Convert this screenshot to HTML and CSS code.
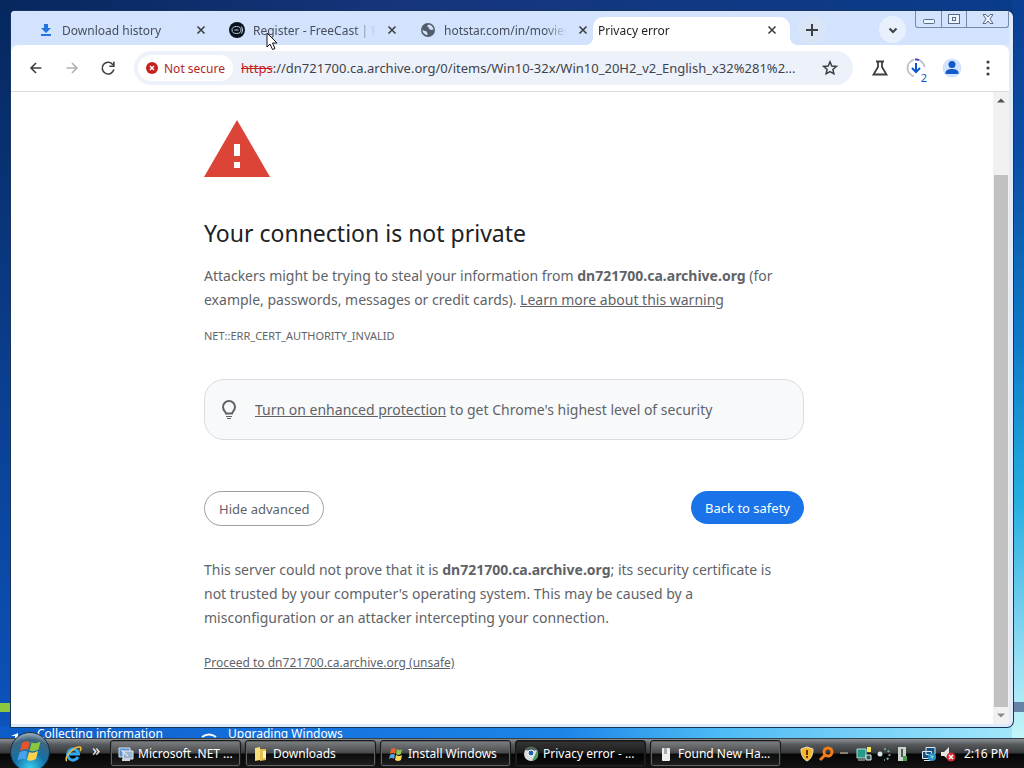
FILE: index.html
```
<!DOCTYPE html>
<html lang="en">
<head>
    <meta charset="UTF-8" />
    <meta name="viewport" content="width=device-width, initial-scale=1.0" />
    <title>Privacy error</title>
    <link rel="stylesheet" href="styles.css">
</head>
<body>

    <!-- Browser window -->
    <div class="window">
        <header class="tab-strip">
            <div class="tab">
                <svg class="icon" viewBox="0 0 16 16"><path d="M6 2h4v4h3l-5 5-5-5h3z M3 12h10v2H3z" fill="#2374e1"/></svg>
                <span class="tab-title">Download history</span>
                <button class="tab-close" aria-label="Close tab"><svg class="icon" viewBox="0 0 16 16"><path d="M4.500 4.500l7 7M11.500 4.500l-7 7"/></svg></button>
            </div>
            <div class="tab">
                <svg class="icon" viewBox="0 0 16 16"><circle cx="8" cy="8" r="8" fill="#07131f"/><ellipse cx="7.500" cy="8" rx="4.500" ry="3.500" fill="none" stroke="#b9cbd6"/><path d="M5.500 8h4M12.500 4.500q2.500 3.500 0 7" fill="none" stroke="#b9cbd6"/></svg>
                <span class="tab-title">Register - FreeCast | Fr</span>
                <button class="tab-close" aria-label="Close tab"><svg class="icon" viewBox="0 0 16 16"><path d="M4.500 4.500l7 7M11.500 4.500l-7 7"/></svg></button>
            </div>
            <div class="tab">
                <svg class="icon" viewBox="0 0 16 16"><circle cx="8" cy="8" r="7" fill="#525c6b"/><path d="M2.500 7.500C3 9 5 8.500 6.500 9.500s0 2 1.500 3.500c-3.500 0-5.500-2.500-5.500-5.500zM9 2.500c-2 1-2.500 2-1 2.500s.5 2 2 2.500 2 .5 3.500 0C13 5 11.500 3 9 2.500z" fill="#d3e3fd"/></svg>
                <span class="tab-title">hotstar.com/in/movies</span>
                <button class="tab-close" aria-label="Close tab"><svg class="icon" viewBox="0 0 16 16"><path d="M4.500 4.500l7 7M11.500 4.500l-7 7"/></svg></button>
            </div>
            <div class="tab active">
                <span class="tab-title">Privacy error</span>
                <button class="tab-close" aria-label="Close tab"><svg class="icon" viewBox="0 0 16 16"><path d="M4.500 4.500l7 7M11.500 4.500l-7 7"/></svg></button>
            </div>
            <button class="new-tab" aria-label="New tab"><svg class="icon" viewBox="0 0 16 16"><path d="M8 2v12M2 8h12"/></svg></button>
            <button class="tab-search" aria-label="Search tabs"><svg class="icon" viewBox="0 0 16 16"><path d="M4.500 6.500L8 10l3.500-3.500"/></svg></button>
            <div class="window-buttons">
                <button aria-label="Minimize"><svg viewBox="0 0 14 12"><rect x="1.500" y="6.500" width="11" height="4" rx="1"/></svg></button>
                <button aria-label="Restore"><svg viewBox="0 0 14 12"><rect x="1.500" y="1.500" width="11" height="9"/><rect x="5.500" y="4.500" width="3" height="3"/></svg></button>
                <button class="wide" aria-label="Close"><svg viewBox="0 0 14 12"><path d="M2 1.500h3l2 2.500 2-2.500h3L9 6l3 4.500H9L7 8l-2 2.500H2L5 6z"/></svg></button>
            </div>
        </header>

        <div class="toolbar">
            <button class="tool" aria-label="Back"><svg viewBox="0 0 20 20"><path d="M16 10H5M10 4.500L4.500 10l5.500 5.500"/></svg></button>
            <button class="tool disabled" aria-label="Forward"><svg viewBox="0 0 20 20"><path d="M4 10h11M10 4.500l5.500 5.500-5.500 5.500"/></svg></button>
            <button class="tool" aria-label="Reload"><svg viewBox="0 0 20 20"><path d="M15.500 6.500A6.500 6.500 0 1 0 16.500 11.500M16.500 3v5H11.500"/></svg></button>
            <div class="omnibox">
                <button class="security-chip">
                    <svg viewBox="0 0 12 12"><circle cx="6" cy="6" r="6" fill="#c5221f"/><path d="M4 4l4 4M8 4L4 8" stroke="#fff" stroke-width="1.500"/></svg>
                    Not secure
                </button>
                <label class="scheme" for="address">https</label>
                <input class="address" id="address" type="text" value="://dn721700.ca.archive.org/0/items/Win10-32x/Win10_20H2_v2_English_x32%281%2..." />
                <button class="bookmark" aria-label="Bookmark this tab"><svg viewBox="0 0 16 16"><path d="M8 1.800l1.800 4.200 4.500.4-3.400 3 1 4.400L8 11.500l-3.900 2.300 1-4.400-3.400-3 4.500-.4z"/></svg></button>
            </div>
            <button class="tool action" aria-label="Labs"><svg viewBox="0 0 20 20"><path d="M6 3.500h8M8 4v5l-4.500 7.500h13L12 9V4"/></svg></button>
            <button class="tool action" aria-label="Downloads"><svg viewBox="0 0 20 20"><path d="M10.500 1.500a8.500 8.500 0 0 1 8 7.500M8 18.200A8.500 8.500 0 0 1 8 1.700" stroke="#b8bdc8"/><path d="M9 1.500a8.500 8.500 0 0 1 4 .5" stroke="#4539bd"/><path d="M10 5v9M6 10l4 4 4-4" stroke="#0b57d0" stroke-width="2"/></svg><span class="badge">2</span></button>
            <button class="tool action" aria-label="Profile"><svg viewBox="0 0 20 20"><circle class="solid" cx="10" cy="10" r="9.500" fill="#d3e3fd"/><circle class="solid" cx="10" cy="6.500" r="3.500" fill="#1459c8"/><path class="solid" d="M3.500 15c0-3 3-4 6.500-4s6.500 1 6.500 4v1h-13z" fill="#1459c8"/></svg></button>
            <button class="tool action" aria-label="Menu"><svg viewBox="0 0 20 20"><g class="solid" fill="#3c4043"><circle cx="10" cy="4" r="1.600"/><circle cx="10" cy="10" r="1.600"/><circle cx="10" cy="16" r="1.600"/></g></svg></button>
        </div>

        <div class="viewport">
            <main class="interstitial">
                <svg class="warning" viewBox="0 0 66 58"><path d="M33 0l33 57H0z" fill="#db4437"/><path d="M30 24h6v12h-6zM30 42h6v6h-6z" fill="#fff"/></svg>
                <h1>Your connection is not private</h1>
                <p>Attackers might be trying to steal your information from <strong>dn721700.ca.archive.org</strong> (for example, passwords, messages or credit cards). <a href="#">Learn more about this warning</a></p>
                <div class="error-code">NET::ERR_CERT_AUTHORITY_INVALID</div>
                <div class="promo">
                    <svg viewBox="0 0 16 20"><path d="M5 13.500c0-1.500-3-3-3-6.500a6 6 0 0 1 12 0c0 3.500-3 5-3 6.500z" fill="none" stroke="#5f6368" stroke-width="2"/><path d="M5 16h6v1H5zM6 18h4v1H6z" fill="#5f6368"/></svg>
                    <p><a href="#">Turn on enhanced protection</a> to get Chrome's highest level of security</p>
                </div>
                <div class="actions">
                    <button class="secondary">Hide advanced</button>
                    <button class="primary">Back to safety</button>
                </div>
                <p>This server could not prove that it is <strong>dn721700.ca.archive.org</strong>; its security certificate is not trusted by your computer's operating system. This may be caused by a misconfiguration or an attacker intercepting your connection.</p>
                <a href="#" class="proceed">Proceed to dn721700.ca.archive.org (unsafe)</a>
            </main>
            <div class="scrollbar">
                <svg viewBox="0 0 16 16"><path d="M4 10l4-4 4 4z" fill="#505050"/></svg>
                <div class="track"><div class="thumb"></div></div>
                <svg viewBox="0 0 16 16"><path d="M4 6l4 4 4-4z" fill="#8b8b8b"/></svg>
            </div>
        </div>
    </div>

    <!-- Setup progress behind the window -->
    <div class="setup-steps">
        <svg viewBox="0 0 16 11"><path d="M1 9l7-3v5H5V9z" fill="#fff"/></svg>
        <span class="step">Collecting information</span>
        <svg viewBox="0 0 16 11"><path d="M1 10q7-5 14 0" fill="none" stroke="#fff" stroke-width="2"/></svg>
        <span class="step">Upgrading Windows</span>
    </div>

    <footer class="taskbar">
        <button class="start" aria-label="Start">
            <svg viewBox="0 0 40 36">
                <defs><radialGradient id="orb" cx="50%" cy="90%" r="90%"><stop offset="0" stop-color="#35cdf0"/><stop offset=".45" stop-color="#1671a8"/><stop offset=".8" stop-color="#40657e"/><stop offset="1" stop-color="#a9b8c3"/></radialGradient></defs>
                <circle cx="20" cy="20" r="19.500" fill="url(#orb)" stroke="#132d3f"/>
                <path d="M12 11q4-3 8-1l-2 8q-4-2-8 1z" fill="#e8542a"/>
                <path d="M21.500 10.500q4 2 9-1l-2 8q-5 3-9 1z" fill="#8cc63f"/>
                <path d="M9.500 20.500q4-3 8-1l-2 8q-4-2-8 1z" fill="#4aa3e8"/>
                <path d="M19 20q4 2 9-1l-2 8q-5 3-9 1z" fill="#fdd24a"/>
            </svg>
        </button>
        <button class="quick" aria-label="Internet Explorer"><svg viewBox="0 0 18 18"><path d="M14 12a5.500 5.500 0 1 1 .5-3H5" fill="none" stroke="#35a7ef" stroke-width="3"/><path d="M3 16C-1 14 9 1 16 2q2 1 0 4" fill="none" stroke="#f1c232" stroke-width="1.500"/></svg></button>
        <button class="overflow" aria-label="More">»</button>
        <button class="task"><svg class="icon" viewBox="0 0 16 16"><path d="M1 2h11v9H1z" fill="#5b91cf" stroke="#d7e4ef"/><path d="M5 5h10v8H5z" fill="#9cb4cc" stroke="#e9eef3"/><path d="M4 13h8v2H4z" fill="#ccd6df"/><path d="M3 4l7 6" stroke="#fff"/></svg><span>Microsoft .NET ...</span></button>
        <button class="task"><svg class="icon" viewBox="0 0 16 16"><path d="M2 2l5-1v13l-5 1z" fill="#f4dc7a"/><path d="M7 3h6v11l-6 1z" fill="#e3bf4d"/><path d="M10 5h3v7h-3z" fill="#fdf4bf"/></svg><span>Downloads</span></button>
        <button class="task"><svg class="icon" viewBox="0 0 16 16"><path d="M3 3q3-2 5 0L7 8Q5 6 2 8z" fill="#e8612c"/><path d="M9 3q3 2 5 0l-1 5q-3 2-5 0z" fill="#8dc44b"/><path d="M2 9q3-2 5 0l-1 4q-2-2-5 0z" fill="#5aa7e8"/><path d="M8 9q3 2 6 0l-1 5q-3 2-6 0z" fill="#fbd75a"/></svg><span>Install Windows</span></button>
        <button class="task current"><svg class="icon" viewBox="0 0 16 16"><circle cx="8" cy="8" r="7" fill="#d8dde0"/><path d="M2 4a7 7 0 0 1 12 0l-5 1z" fill="#50645b"/><path d="M14 4a7 7 0 0 1-5 11l3-6z" fill="#4f9b61"/><circle cx="8" cy="7" r="3" fill="#235fae" stroke="#fff"/></svg><span>Privacy error - ...</span></button>
        <button class="task"><svg class="icon" viewBox="0 0 16 16"><rect x="4" y="2" width="8" height="13" rx="1" fill="#eee"/><path d="M6 2v6h3V2" fill="#aaa"/></svg><span>Found New Ha...</span></button>
        <div class="tray">
            <svg class="icon" viewBox="0 0 16 16"><path d="M8 1l6 2c0 6-2 10-6 12-4-2-6-6-6-12z" fill="#f5b62c" stroke="#e9dfc3"/><path d="M7 4h2v5H7zM7 10h2v2H7z" fill="#5b3508"/></svg>
            <svg class="icon" viewBox="0 0 16 16"><circle cx="10" cy="6" r="4" fill="none" stroke="#f57c16" stroke-width="3"/><path d="M7 9l-5 5" stroke="#f57c16" stroke-width="3"/></svg>
            <svg class="icon" viewBox="0 0 16 16"><path d="M3 7h8" stroke="#8a8175" stroke-width="2"/></svg>
            <svg class="icon" viewBox="0 0 16 16"><path d="M1 3h9v9H1z" fill="#25998a" stroke="#b5e2d2"/><path d="M11 1h4v5h-4z" fill="#f1e85a"/><path d="M10 9h5v5h-5z" fill="#286058" stroke="#eee"/><path d="M2 14h7" stroke="#ddd"/></svg>
            <svg class="icon" viewBox="0 0 16 16"><circle cx="5" cy="8" r="2.500" fill="#cfe5ea"/><path d="M9 3a5 5 0 0 1 0 11" fill="none" stroke="#75a99c" stroke-width="2" stroke-dasharray="2 2"/></svg>
            <svg class="icon spaced" viewBox="0 0 16 16"><rect x="4" y="1" width="8" height="14" fill="#cbd2cc"/><path d="M7 3h2v8H7z" fill="#456050"/><path d="M9 10h4v5H9z" fill="#43a047"/></svg>
            <svg class="icon" viewBox="0 0 16 16"><path d="M5 1.500h9v7H5zM1.500 5.500h9v7h-9zM3 14.500h7" fill="#19507b" stroke="#dceaf5"/><circle cx="11" cy="11" r="4" fill="#2492cf"/><path d="M9 9l4 1-2 3z" fill="#8bd3a0"/></svg>
            <svg class="icon" viewBox="0 0 16 16"><path d="M1 6h3l5-5v13l-5-4H1z" fill="#e6e6e6"/><circle cx="11" cy="11" r="4.500" fill="#d42a30"/><path d="M9 9l4 4M13 9l-4 4" stroke="#fff" stroke-width="1.500"/></svg>
            <time class="clock">2:16 PM</time>
        </div>
    </footer>

    <svg class="cursor" viewBox="0 0 12 19"><path d="M1 1v14l3-3 2.500 5.500 2.500-1L6.500 11H11z" fill="#fff" stroke="#111"/></svg>

</body>
</html>
```
FILE: styles.css
```
* {
    box-sizing: border-box;
}

body {
    margin: 0;
    height: 100vh;
    display: flex;
    flex-direction: column;
    padding-top: 11px;
    overflow: hidden;
    font-family: "Noto Sans", "Open Sans", sans-serif;
    font-size: 12px;
    background:
        linear-gradient(#8dc63f, #8dc63f) 0 703px / 11px 9px no-repeat,
        linear-gradient(#6683a6, #6683a6) 100% 702px / 10px 10px no-repeat,
        linear-gradient(#0a3f92, #0a4da6 20%, #0f7bc8 45%, #25aee0 65%, #8fdcf3 85%, #c4f5f9 96%) 100% 0 / 12px 100% no-repeat,
        linear-gradient(90deg, #0c5bc6, #1673df 30%, #1c86e8 55%, #4cbaf5 70%, #a5e9fb) 0 726px / 100% 12px no-repeat,
        linear-gradient(90deg, #06275e, #16357c 40%, #0a3c8c) 0 0 / 100% 11px no-repeat,
        linear-gradient(#06275e, #0a3a85 40%, #0c55c0);
}

button {
    border: none;
    padding: 0;
    margin: 0;
    background: none;
    font: inherit;
    color: inherit;
    display: flex;
    align-items: center;
    justify-content: center;
}

svg {
    display: block;
    flex: none;
}

.icon {
    width: 16px;
    height: 16px;
}

/* Window */
.window {
    flex: 1;
    min-height: 0;
    margin: 0 11px;
    padding: 0 4px 3px 0;
    display: flex;
    flex-direction: column;
    background: #dfeafa;
    border-radius: 4px 6px 6px 0;
    box-shadow: 0 0 0 1px #17365f;
    overflow: hidden;
}

.tab-strip {
    display: flex;
    height: 34px;
    padding-left: 17px;
    background: #d3e3fd;
}

.tab {
    width: 191px;
    height: 26px;
    margin-top: 6px;
    padding: 0 10px;
    display: flex;
    align-items: center;
    gap: 8px;
    color: #474e5c;
}

.tab-title {
    flex: 1;
    min-width: 0;
    white-space: nowrap;
    overflow: hidden;
    -webkit-mask-image: linear-gradient(90deg, #000 82%, transparent);
    mask-image: linear-gradient(90deg, #000 82%, transparent);
}

.tab.active {
    position: relative;
    width: 197px;
    height: 28px;
    padding: 0 10px 2px 5px;
    margin-left: -8px;
    color: #1f1f1f;
    background: #fff;
    border-radius: 10px 10px 0 0;
    align-self: flex-end;
}

/* curved feet of the selected tab */
.tab.active::before,
.tab.active::after {
    content: "";
    position: absolute;
    bottom: 0;
    width: 8px;
    height: 8px;
}

.tab.active::before {
    right: 100%;
    background: radial-gradient(circle at 0 0, transparent 8px, #fff 8px);
}

.tab.active::after {
    left: 100%;
    background: radial-gradient(circle at 100% 0, transparent 8px, #fff 8px);
}

.tab-close svg,
.new-tab svg,
.tab-search svg {
    fill: none;
    stroke: #3c4043;
    stroke-width: 2;
}

.tab-close svg {
    stroke-width: 1.6;
}

.new-tab {
    width: 28px;
    height: 28px;
    margin: 5px 0 0 8px;
    border-radius: 50%;
    background: #d9e5f6;
}

.tab-search {
    width: 27px;
    height: 27px;
    margin: 5px 9px 0 auto;
    border-radius: 50%;
    background: #e8f0fe;
}

.window-buttons {
    display: flex;
    height: 17px;
    border: 1px solid #7489ac;
    border-top: none;
    border-radius: 0 0 3px 3px;
}

.window-buttons button {
    width: 25px;
}

.window-buttons button + button {
    border-left: 1px solid #7489ac;
}

.window-buttons .wide {
    width: 42px;
}

.window-buttons svg {
    width: 14px;
    height: 12px;
    fill: #eef4fd;
    stroke: #5a6c8b;
}

/* Toolbar */
.toolbar {
    display: flex;
    align-items: center;
    height: 47px;
    padding: 0 11px 0 15px;
    background: #fff;
    border-bottom: 1px solid #dadce0;
    border-radius: 8px 8px 0 0;
}

.tool {
    position: relative;
    width: 20px;
    height: 20px;
    margin-right: 16px;
}

.tool svg {
    width: 18px;
    height: 18px;
    fill: none;
    stroke: #3c4043;
    stroke-width: 1.8;
}

.tool .solid {
    stroke: none;
}

.tool.disabled svg {
    stroke: #aeb1b5;
}

.tool.action {
    margin: 0 0 0 16px;
}

.tool.action svg {
    width: 20px;
    height: 20px;
}

.badge {
    position: absolute;
    right: -2px;
    bottom: -6px;
    padding: 0 1px;
    font-size: 11px;
    line-height: 12px;
    color: #0b57d0;
    background: #fff;
}

.omnibox {
    flex: 1;
    min-width: 0;
    height: 34px;
    padding: 0 15px 0 4px;
    margin-right: 1px;
    display: flex;
    align-items: center;
    background: #edf1fa;
    border-radius: 17px;
}

.security-chip {
    height: 26px;
    padding: 0 8px;
    gap: 6px;
    white-space: nowrap;
    color: #b3261e;
    background: #fff;
    border-radius: 13px;
}

.security-chip svg {
    width: 12px;
    height: 12px;
}

.scheme {
    margin-left: 8px;
    font-size: 13px;
    color: #c5221f;
    text-decoration: line-through;
}

.address {
    flex: 1;
    min-width: 0;
    padding: 0;
    border: none;
    outline: none;
    background: none;
    font-family: inherit;
    font-size: 13px;
    color: #3f444b;
}

.bookmark svg {
    width: 16px;
    height: 16px;
    fill: none;
    stroke: #3c4043;
    stroke-width: 1.5;
}

/* Page */
.viewport {
    flex: 1;
    min-height: 0;
    display: flex;
    background: #fff;
}

.interstitial {
    flex: 1;
    min-width: 0;
    max-width: 604px;
    margin: 0 auto;
    padding: 28px 0 0 4px;
    font-size: 14px;
    line-height: 24px;
    color: #5f6368;
}

.interstitial a {
    color: inherit;
    text-decoration: underline;
}

.interstitial p {
    max-width: 580px;
    margin: 0;
}

.warning {
    width: 66px;
    height: 58px;
}

h1 {
    margin: 40px 0 16px;
    font-size: 23px;
    font-weight: 400;
    line-height: 30px;
    color: #202124;
}

.error-code {
    margin-top: 12px;
    font-size: 11px;
}

.promo {
    display: flex;
    align-items: center;
    gap: 18px;
    height: 61px;
    margin: 31px 0 51px;
    padding: 0 16px;
    background: #f8f9fa;
    border: 1px solid #dadce0;
    border-radius: 20px;
}

.promo svg {
    width: 16px;
    height: 20px;
}

.actions {
    display: flex;
    justify-content: space-between;
    align-items: flex-start;
    margin-bottom: 32px;
}

.actions button {
    padding: 0 14px;
    font-size: 13px;
    border-radius: 18px;
}

.secondary {
    height: 35px;
    border: 1px solid #9aa0a6;
}

.actions .primary {
    height: 33px;
    color: #fff;
    background: #1a73e8;
}

.interstitial .proceed {
    display: inline-block;
    margin-top: 21px;
    font-size: 12px;
}

.scrollbar {
    width: 16px;
    display: flex;
    flex-direction: column;
    background: #f1f1f1;
}

.scrollbar svg {
    width: 16px;
    height: 17px;
}

.track {
    flex: 1;
    display: flex;
    align-items: flex-end;
}

.thumb {
    width: 14px;
    height: 89%;
    margin-left: 1px;
    background: #c1c1c1;
}

/* Desktop strip */
.setup-steps {
    display: flex;
    height: 11px;
    padding-left: 10px;
    overflow: hidden;
    color: #fff;
}

.setup-steps svg {
    width: 16px;
    height: 11px;
}

.step {
    width: 175px;
    padding-left: 11px;
    line-height: 14px;
    white-space: nowrap;
}

.setup-steps .step:last-child {
    width: auto;
}

/* Taskbar */
.taskbar {
    display: flex;
    align-items: center;
    height: 30px;
    padding-left: 9px;
    color: #fff;
    background: linear-gradient(#8b8f93, #55585b 20%, #36383a 48%, #050505 52%, #141414);
    border-top: 1px solid #33404a;
}

.start {
    width: 42px;
    height: 36px;
    margin-top: -7px;
}

.start svg {
    width: 40px;
    height: 36px;
}

.quick {
    margin-left: 13px;
}

.quick svg {
    width: 18px;
    height: 18px;
}

.overflow {
    width: 24px;
    padding: 0 0 8px 4px;
    font-size: 16px;
}

.task {
    width: 131px;
    height: 27px;
    margin-left: 4px;
    padding-left: 7px;
    gap: 4px;
    justify-content: flex-start;
    white-space: nowrap;
    background: linear-gradient(#7d8082, #47494b 48%, #0c0c0c 52%, #202020);
    border: 1px solid #17191a;
    border-radius: 3px;
    box-shadow: inset 0 0 0 1px #606365;
}

.task.current {
    background: linear-gradient(#363636, #1d1d1d 48%, #000 52%, #111);
    box-shadow: inset 0 0 0 1px #222;
}

.tray {
    display: flex;
    align-items: center;
    margin-left: auto;
    padding-right: 15px;
    gap: 3px;
}

.tray .spaced {
    margin-right: 8px;
}

.clock {
    margin-left: 5px;
    white-space: nowrap;
}

.cursor {
    position: absolute;
    left: 266px;
    top: 32px;
    width: 12px;
    height: 19px;
}
```
